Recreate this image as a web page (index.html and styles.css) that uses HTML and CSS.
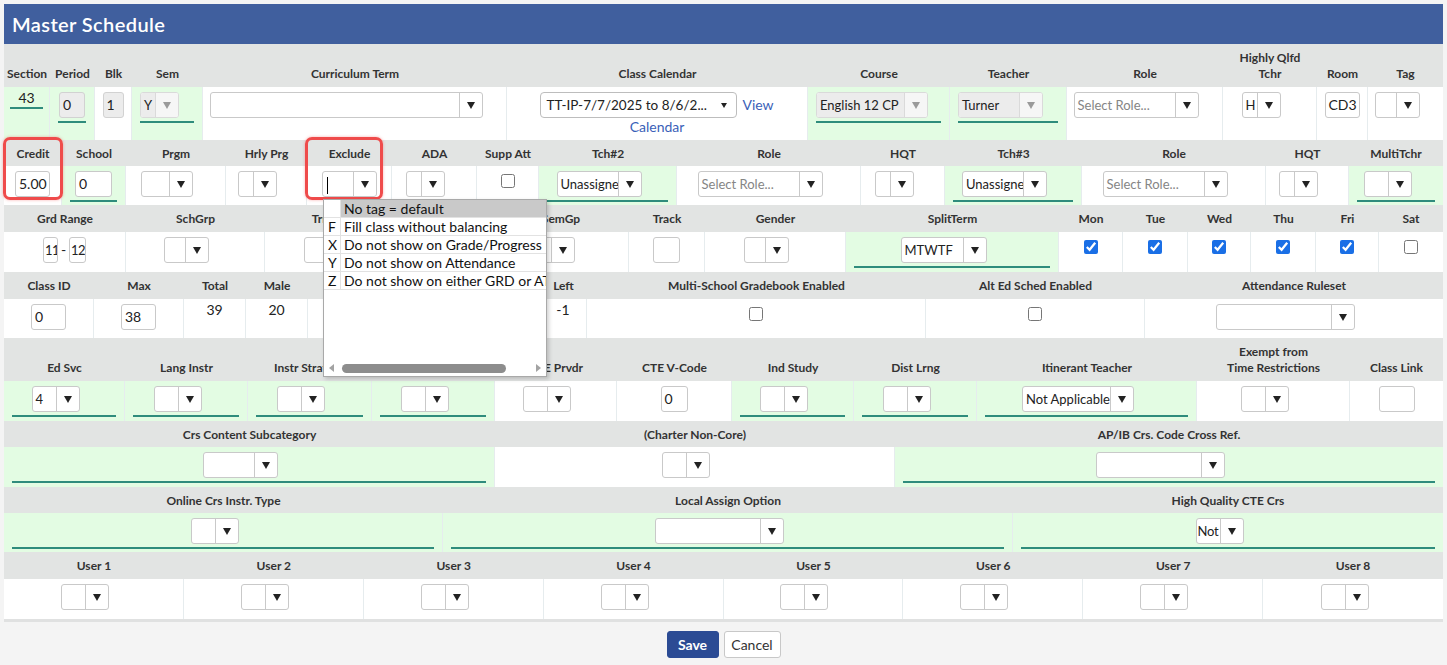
FILE: index.html
```html
<!DOCTYPE html>
<html lang="en">
<head>
<meta charset="utf-8">
<title>Master Schedule</title>
<link rel="stylesheet" href="styles.css">
</head>
<body>
<div class="sheet">
  <div class="titlebar">Master Schedule</div>

  <div class="sec r1">
    <div class="h">Section</div><div class="h">Period</div><div class="h">Blk</div><div class="h">Sem</div>
    <div class="h">Curriculum Term</div><div class="h">Class Calendar</div><div class="h">Course</div><div class="h">Teacher</div>
    <div class="h">Role</div><div class="h">Highly Qlfd<br>Tchr</div><div class="h">Room</div><div class="h">Tag</div>

    <div class="c g t2"><div class="u sect">43</div></div>
    <div class="c g"><div class="u"><span class="inp dis i26">0</span></div></div>
    <div class="c"><span class="inp dis i21">1</span></div>
    <div class="c g"><div class="u"><span class="sel dis w38"><span class="sv">Y</span><span class="sa"></span></span></div></div>
    <div class="c"><span class="sel w273"><span class="sv"></span><span class="sa"></span></span></div>
    <div class="c cal"><span class="calsel">TT-IP-7/7/2025 to 8/6/2...<span class="tri"></span></span><a class="lnk v1" href="#">View</a><a class="lnk v2" href="#">Calendar</a></div>
    <div class="c g"><div class="u"><span class="sel dis w112"><span class="sv">English 12 CP</span><span class="sa"></span></span></div></div>
    <div class="c g"><div class="u"><span class="sel dis w85"><span class="sv">Turner</span><span class="sa"></span></span></div></div>
    <div class="c"><span class="sel w125"><span class="sv ph">Select Role...</span><span class="sa"></span></span></div>
    <div class="c"><span class="sel w38"><span class="sv">H</span><span class="sa"></span></span></div>
    <div class="c"><span class="inp i35">CD3</span></div>
    <div class="c"><span class="sel w44"><span class="sv"></span><span class="sa"></span></span></div>
  </div>

  <div class="sec r2">
    <div class="h">Credit</div><div class="h">School</div><div class="h">Prgm</div><div class="h">Hrly Prg</div>
    <div class="h">Exclude</div><div class="h">ADA</div><div class="h">Supp Att</div><div class="h">Tch#2</div>
    <div class="h">Role</div><div class="h">HQT</div><div class="h">Tch#3</div><div class="h">Role</div>
    <div class="h">HQT</div><div class="h">MultiTchr</div>

    <div class="c"><span class="inp i35">5.00</span></div>
    <div class="c g"><div class="u"><span class="inp i37">0</span></div></div>
    <div class="c"><span class="sel w52"><span class="sv"></span><span class="sa"></span></span></div>
    <div class="c"><span class="sel w38"><span class="sv"></span><span class="sa"></span></span></div>
    <div class="c"><span class="sel w55 nm"><span class="sv"><span class="cur"></span></span><span class="sa"></span></span></div>
    <div class="c"><span class="sel w38"><span class="sv"></span><span class="sa"></span></span></div>
    <div class="c"><input class="cb" type="checkbox"></div>
    <div class="c g"><div class="u"><span class="sel w85"><span class="sv">Unassigned</span><span class="sa"></span></span></div></div>
    <div class="c"><span class="sel w125"><span class="sv ph">Select Role...</span><span class="sa"></span></span></div>
    <div class="c"><span class="sel w38"><span class="sv"></span><span class="sa"></span></span></div>
    <div class="c g"><div class="u"><span class="sel w85"><span class="sv">Unassigned</span><span class="sa"></span></span></div></div>
    <div class="c"><span class="sel w125"><span class="sv ph">Select Role...</span><span class="sa"></span></span></div>
    <div class="c"><span class="sel w38"><span class="sv"></span><span class="sa"></span></span></div>
    <div class="c g"><div class="u"><span class="sel w48"><span class="sv"></span><span class="sa"></span></span></div></div>
  </div>

  <div class="sec r3">
    <div class="h">Grd Range</div><div class="h">SchGrp</div><div class="h">Trm</div><div class="h"></div>
    <div class="h">SemGp</div><div class="h">Track</div><div class="h">Gender</div><div class="h">SplitTerm</div>
    <div class="h">Mon</div><div class="h">Tue</div><div class="h">Wed</div><div class="h">Thu</div><div class="h">Fri</div><div class="h">Sat</div>

    <div class="c"><span class="inp i15">11</span><span class="dash">-</span><span class="inp i17">12</span></div>
    <div class="c"><span class="sel w44"><span class="sv"></span><span class="sa"></span></span></div>
    <div class="c"><span class="inp i35"></span></div>
    <div class="c"><span class="sel w44"><span class="sv"></span><span class="sa"></span></span></div>
    <div class="c"><span class="sel w44"><span class="sv"></span><span class="sa"></span></span></div>
    <div class="c"><span class="inp i27"></span></div>
    <div class="c"><span class="sel w44"><span class="sv"></span><span class="sa"></span></span></div>
    <div class="c g"><div class="u"><span class="sel w86"><span class="sv">MTWTF</span><span class="sa"></span></span></div></div>
    <div class="c"><input class="cb" type="checkbox" checked></div>
    <div class="c"><input class="cb" type="checkbox" checked></div>
    <div class="c"><input class="cb" type="checkbox" checked></div>
    <div class="c"><input class="cb" type="checkbox" checked></div>
    <div class="c"><input class="cb" type="checkbox" checked></div>
    <div class="c"><input class="cb" type="checkbox"></div>
  </div>

  <div class="sec r4">
    <div class="h">Class ID</div><div class="h">Max</div><div class="h">Total</div><div class="h">Male</div>
    <div class="h"></div><div class="h"></div><div class="h">Left</div>
    <div class="h">Multi-School Gradebook Enabled</div><div class="h">Alt Ed Sched Enabled</div><div class="h">Attendance Ruleset</div>

    <div class="c"><span class="inp i35">0</span></div>
    <div class="c"><span class="inp i35">38</span></div>
    <div class="c t">39</div>
    <div class="c t">20</div>
    <div class="c t"></div>
    <div class="c t"></div>
    <div class="c t">-1</div>
    <div class="c"><input class="cb" type="checkbox"></div>
    <div class="c"><input class="cb" type="checkbox"></div>
    <div class="c"><span class="sel w139"><span class="sv"></span><span class="sa"></span></span></div>
  </div>

  <div class="sec r5">
    <div class="h">Ed Svc</div><div class="h">Lang Instr</div><div class="h">Instr Strategy</div><div class="h"></div>
    <div class="h">CTE Prvdr</div><div class="h">CTE V-Code</div><div class="h">Ind Study</div><div class="h">Dist Lrng</div>
    <div class="h">Itinerant Teacher</div><div class="h">Exempt from<br>Time Restrictions</div><div class="h">Class Link</div>

    <div class="c g"><div class="u"><span class="sel w48"><span class="sv">4</span><span class="sa"></span></span></div></div>
    <div class="c g"><div class="u"><span class="sel w48"><span class="sv"></span><span class="sa"></span></span></div></div>
    <div class="c g"><div class="u"><span class="sel w48"><span class="sv"></span><span class="sa"></span></span></div></div>
    <div class="c g"><div class="u"><span class="sel w48"><span class="sv"></span><span class="sa"></span></span></div></div>
    <div class="c"><span class="sel w48"><span class="sv"></span><span class="sa"></span></span></div>
    <div class="c"><span class="inp i27">0</span></div>
    <div class="c g"><div class="u"><span class="sel w48"><span class="sv"></span><span class="sa"></span></span></div></div>
    <div class="c g"><div class="u"><span class="sel w48"><span class="sv"></span><span class="sa"></span></span></div></div>
    <div class="c g"><div class="u"><span class="sel w112"><span class="sv">Not Applicable</span><span class="sa"></span></span></div></div>
    <div class="c"><span class="sel w48"><span class="sv"></span><span class="sa"></span></span></div>
    <div class="c"><span class="inp i36"></span></div>
  </div>

  <div class="sec r6">
    <div class="h">Crs Content Subcategory</div><div class="h">(Charter Non-Core)</div><div class="h">AP/IB Crs. Code Cross Ref.</div>
    <div class="c g"><div class="u"><span class="sel w75"><span class="sv"></span><span class="sa"></span></span></div></div>
    <div class="c"><span class="sel w48"><span class="sv"></span><span class="sa"></span></span></div>
    <div class="c g"><div class="u"><span class="sel w129"><span class="sv"></span><span class="sa"></span></span></div></div>
  </div>

  <div class="sec r7">
    <div class="h">Online Crs Instr. Type</div><div class="h">Local Assign Option</div><div class="h">High Quality CTE Crs</div>
    <div class="c g"><div class="u"><span class="sel w48"><span class="sv"></span><span class="sa"></span></span></div></div>
    <div class="c g"><div class="u"><span class="sel w129"><span class="sv"></span><span class="sa"></span></span></div></div>
    <div class="c g"><div class="u"><span class="sel w48"><span class="sv tight">Not</span><span class="sa"></span></span></div></div>
  </div>

  <div class="sec r8">
    <div class="h">User 1</div><div class="h">User 2</div><div class="h">User 3</div><div class="h">User 4</div>
    <div class="h">User 5</div><div class="h">User 6</div><div class="h">User 7</div><div class="h">User 8</div>
    <div class="c"><span class="sel w48"><span class="sv"></span><span class="sa"></span></span></div>
    <div class="c"><span class="sel w48"><span class="sv"></span><span class="sa"></span></span></div>
    <div class="c"><span class="sel w48"><span class="sv"></span><span class="sa"></span></span></div>
    <div class="c"><span class="sel w48"><span class="sv"></span><span class="sa"></span></span></div>
    <div class="c"><span class="sel w48"><span class="sv"></span><span class="sa"></span></span></div>
    <div class="c"><span class="sel w48"><span class="sv"></span><span class="sa"></span></span></div>
    <div class="c"><span class="sel w48"><span class="sv"></span><span class="sa"></span></span></div>
    <div class="c"><span class="sel w48"><span class="sv"></span><span class="sa"></span></span></div>
  </div>

  <div class="mark mk-credit"></div>
  <div class="mark mk-exclude"></div>

  <div class="dd">
    <div class="dd-list">
      <div class="dd-row on"><span class="dd-k"></span><span class="dd-t">No tag = default</span></div>
      <div class="dd-row"><span class="dd-k">F</span><span class="dd-t">Fill class without balancing</span></div>
      <div class="dd-row"><span class="dd-k">X</span><span class="dd-t">Do not show on Grade/Progress Report</span></div>
      <div class="dd-row"><span class="dd-k">Y</span><span class="dd-t">Do not show on Attendance</span></div>
      <div class="dd-row"><span class="dd-k">Z</span><span class="dd-t">Do not show on either GRD or ATT</span></div>
    </div>
    <div class="dd-sb">
      <span class="sb-l"></span>
      <span class="sb-thumb"></span>
      <span class="sb-r"></span>
    </div>
  </div>
</div>

<div class="foot">
  <button class="btn save" type="button">Save</button>
  <button class="btn cancel" type="button">Cancel</button>
</div>
</body>
</html>
```
FILE: styles.css
```css
html, body {
  margin: 0;
}
body {
  padding: 4px 4px 0;
  background: #f4f4f4;
  font-family: Lato, "Liberation Sans", sans-serif;
  color: #222;
}
.sheet {
  position: relative;
  width: 1439px;
}
.titlebar {
  height: 40px;
  background: #405f9e;
  color: #fff;
  font-size: 20px;
  font-weight: 600;
  line-height: 40px;
  padding-left: 8px;
  letter-spacing: 0.4px;
}

.sec {
  display: grid;
  background: #fff;
}
.r1 { grid-template-columns: 46px 45px 37px 71px 304px 301px 142px 117px 156px 94px 51px 75px; grid-template-rows: 43px 53px; }
.r2 { grid-template-columns: 58px 64px 100px 81px 85px 85px 62px 138px 184px 84px 137px 184px 83px 94px; grid-template-rows: 26px 39px; }
.r3 { grid-template-columns: 122px 139px 114px 114px 136px 76px 141px 213px 64px 65px 63px 65px 63px 64px; grid-template-rows: 27px 40px; }
.r4 { grid-template-columns: 90px 90px 62px 62px 116px 116px 47px 339px 219px 298px; grid-template-rows: 27px 39px; }
.r5 { grid-template-columns: 121px 123px 124px 123px 122px 115px 122px 123px 220px 153px 93px; grid-template-rows: 43px 40px; }
.r6 { grid-template-columns: 491px 400px 548px; grid-template-rows: 26px 40px; }
.r7 { grid-template-columns: 439px 570px 430px; grid-template-rows: 26px 39px; }
.r8 { grid-template-columns: repeat(8, 1fr); grid-template-rows: 27px 40px; border-bottom: 3px solid #e0e1e1; }

.h {
  background: #e2e4e3;
  display: flex;
  align-items: flex-end;
  justify-content: center;
  text-align: center;
  font-size: 12px;
  font-weight: 700;
  line-height: 16px;
  padding-bottom: 5px;
  color: #333;
  white-space: nowrap;
  box-sizing: border-box;
}
.r2 .h, .r6 .h, .r7 .h { padding-bottom: 4px; }

.c {
  padding-top: 5px;
  text-align: center;
  line-height: 18px;
  font-size: 13px;
  border-right: 1px solid #e6ecee;
  box-sizing: border-box;
  min-width: 0;
}
.c:last-child { border-right: 0; }
.c.g { background: #e3fce3; }
.c.t { padding-top: 2px; font-size: 14px; }
.c.t2 { padding-top: 3px; }

.u {
  margin: 0 8px;
  padding-bottom: 3px;
  border-bottom: 2px solid #2f8c7c;
}
.u.sect {
  margin: 0 6px;
  padding-bottom: 1px;
  line-height: 16px;
  font-size: 14px;
}

/* select-like control */
.sel {
  display: inline-flex;
  vertical-align: top;
  height: 26px;
  box-sizing: border-box;
  border: 1px solid #c9c9c9;
  border-radius: 3px;
  background: #fff;
  margin-right: 17px;
  overflow: hidden;
  text-align: left;
}
.sel.nm { margin-right: 0; }
.sv {
  flex: 1;
  min-width: 0;
  padding: 0 3px;
  line-height: 24px;
  font-size: 13px;
  white-space: nowrap;
  overflow: hidden;
}
.sv.tight { padding: 0 1px; letter-spacing: -0.2px; }
.sv.ph { color: #858585; }
.sa {
  flex: none;
  width: 22px;
  border-left: 1px solid #c9c9c9;
  display: flex;
  align-items: center;
  justify-content: center;
}
.sa::after {
  content: "";
  border-left: 4px solid transparent;
  border-right: 4px solid transparent;
  border-top: 7px solid #222;
}
.sel.dis { border-color: #dadada; }
.sel.dis .sv { background: #ececec; }
.sel.dis .sa { background: #f6f6f6; border-left-color: #dadada; }
.sel.dis .sa::after { border-top-color: #9a9a9a; }

.w38 { width: 39px; }
.w44 { width: 45px; }
.w48 { width: 48px; }
.w52 { width: 52px; }
.w55 { width: 55px; }
.w75 { width: 75px; }
.w85 { width: 85px; }
.w86 { width: 86px; }
.w112 { width: 112px; }
.w125 { width: 125px; }
.w129 { width: 129px; }
.w139 { width: 139px; }
.w273 { width: 273px; }

.cur {
  display: inline-block;
  width: 1px;
  height: 17px;
  background: #000;
  vertical-align: middle;
  margin-left: 1px;
}

/* text input-like control */
.inp {
  display: inline-block;
  vertical-align: top;
  height: 26px;
  box-sizing: border-box;
  border: 1px solid #c9c9c9;
  border-radius: 3px;
  background: #fff;
  font-size: 14px;
  line-height: 24px;
  padding: 0 3px;
  text-align: left;
  white-space: nowrap;
  overflow: hidden;
}
.inp.dis { background: #ececec; border-color: #d2d2d2; }
.i15 { width: 15px; padding: 0 1px; font-size: 13px; letter-spacing: -0.5px; }
.i17 { width: 17px; padding: 0 1px; font-size: 13px; letter-spacing: -0.5px; }
.i21 { width: 21px; }
.i26 { width: 26px; }
.i27 { width: 27px; }
.i35 { width: 35px; }
.i36 { width: 36px; }
.i37 { width: 37px; }
.dash {
  display: inline-block;
  vertical-align: top;
  line-height: 26px;
  width: 11px;
  font-size: 14px;
}

.cb {
  width: 14px;
  height: 14px;
  margin: 3px 0 0;
  accent-color: #1a6fe6;
}

/* class calendar */
.cal { text-align: center; }
.calsel {
  display: inline-block;
  vertical-align: top;
  width: 197px;
  height: 26px;
  box-sizing: border-box;
  border: 1px solid #bdbdbd;
  border-radius: 4px;
  background: #fff;
  font-size: 13.5px;
  line-height: 24px;
  padding-left: 5px;
  text-align: left;
  position: relative;
  white-space: nowrap;
}
.tri {
  position: absolute;
  right: 9px;
  top: 10px;
  border-left: 3.5px solid transparent;
  border-right: 3.5px solid transparent;
  border-top: 5px solid #222;
}
.lnk {
  color: #3a5fb8;
  text-decoration: none;
  font-size: 14px;
}
.v1 {
  display: inline-block;
  vertical-align: top;
  line-height: 26px;
  margin-left: 5px;
}
.v2 {
  display: block;
  line-height: 18px;
}

/* annotation boxes */
.mark {
  position: absolute;
  box-sizing: border-box;
  border: 3px solid #ef4b4b;
  border-radius: 7px;
  box-shadow: 0 0 3px rgba(239, 75, 75, 0.45);
}
.mk-credit { left: -1px; top: 133px; width: 60px; height: 63px; }
.mk-exclude { left: 301px; top: 133px; width: 78px; height: 63px; }

/* dropdown */
.dd {
  position: absolute;
  left: 319px;
  top: 195px;
  width: 224px;
  height: 178px;
  box-sizing: border-box;
  background: #fff;
  border: 1px solid #a9a9a9;
  box-shadow: 2px 2px 4px rgba(0, 0, 0, 0.18);
  overflow: hidden;
}
.dd-list {
  width: 330px;
}
.dd-row {
  display: flex;
  height: 18px;
  box-sizing: border-box;
  border-bottom: 1px solid #e2e2e2;
  font-size: 14px;
  line-height: 17px;
  white-space: nowrap;
  color: #111;
}
.dd-k {
  flex: none;
  width: 17px;
  box-sizing: border-box;
  border-right: 1px solid #e2e2e2;
  padding-left: 4px;
}
.dd-t {
  flex: 1;
  padding-left: 3px;
}
.dd-row.on .dd-t { background: #c9c9c9; }
.dd-sb {
  position: absolute;
  left: 0;
  right: 0;
  top: 164px;
  height: 9px;
}
.sb-l {
  position: absolute;
  left: 5px;
  top: 0;
  border-top: 4.5px solid transparent;
  border-bottom: 4.5px solid transparent;
  border-right: 5px solid #a3a3a3;
}
.sb-r {
  position: absolute;
  left: 212px;
  top: 0;
  border-top: 4.5px solid transparent;
  border-bottom: 4.5px solid transparent;
  border-left: 5px solid #a3a3a3;
}
.sb-thumb {
  position: absolute;
  left: 18px;
  top: 0;
  width: 164px;
  height: 9px;
  border-radius: 5px;
  background: #8d8d8d;
}

/* footer */
.foot {
  display: flex;
  justify-content: center;
  gap: 5px;
  padding-top: 9px;
}
.btn {
  height: 27px;
  box-sizing: border-box;
  border-radius: 3px;
  font-family: Lato, "Liberation Sans", sans-serif;
  font-size: 14px;
  line-height: 25px;
  padding: 0;
  cursor: pointer;
}
.save {
  width: 52px;
  background: #2b4b94;
  border: 1px solid #2b4b94;
  color: #fff;
  font-weight: 700;
}
.cancel {
  width: 57px;
  background: #fff;
  border: 1px solid #c8c8c8;
  color: #333;
}
```
